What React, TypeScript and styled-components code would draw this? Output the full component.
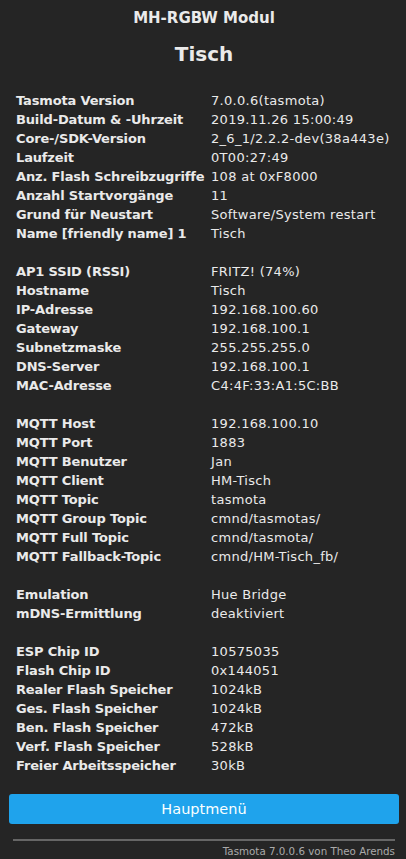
import React from "react";
import styled, { createGlobalStyle } from "styled-components";

const GlobalStyle = createGlobalStyle`
  html, body {
    margin: 0;
    padding: 0;
    background: #252525;
  }
  body {
    color: #eaeaea;
    font-family: "DejaVu Sans", Verdana, sans-serif;
  }
`;

const Page = styled.div`
  width: 406px;
  min-height: 859px;
  box-sizing: border-box;
  padding: 0 7px 0 9px;
  display: flex;
  flex-direction: column;
`;

const Module = styled.h3`
  margin: 0;
  padding-top: 9px;
  height: 18px;
  line-height: 18px;
  font-size: 15px;
  font-weight: bold;
  text-align: center;
`;

const DeviceName = styled.h2`
  margin: 0;
  padding-top: 15px;
  height: 24px;
  line-height: 24px;
  font-size: 20px;
  font-weight: bold;
  text-align: center;
`;

const InfoTable = styled.div`
  margin-top: 25px;
  padding-left: 7px;
  display: grid;
  grid-template-columns: 195px 1fr;
  grid-auto-rows: 19px;
  font-size: 13px;
  line-height: 19px;
`;

const Label = styled.div`
  font-weight: bold;
  color: #eaeaea;
  white-space: nowrap;
  letter-spacing: -0.15px;
`;

const Value = styled.div`
  color: #eaeaea;
  white-space: nowrap;
  letter-spacing: 0.3px;
`;

const Spacer = styled.div`
  grid-column: 1 / span 2;
`;

const MenuButton = styled.button`
  margin-top: 19px;
  width: 390px;
  height: 30px;
  border: 0;
  border-radius: 3px;
  background: #1fa3ec;
  color: #faffff;
  font-family: "DejaVu Sans", Verdana, sans-serif;
  font-size: 14.5px;
  line-height: 30px;
  padding: 0;
  cursor: pointer;
`;

const Rule = styled.hr`
  margin: 15px 4px 0 4px;
  border: 0;
  border-top: 2px solid #666;
  height: 0;
`;

const Footer = styled.div`
  margin: 3px 4px 0 0;
  text-align: right;
  font-size: 10.3px;
  line-height: 14px;
  color: #aaa;
`;

type Row = [string, string] | null;

const rows: Row[] = [
  ["Tasmota Version", "7.0.0.6(tasmota)"],
  ["Build-Datum & -Uhrzeit", "2019.11.26 15:00:49"],
  ["Core-/SDK-Version", "2_6_1/2.2.2-dev(38a443e)"],
  ["Laufzeit", "0T00:27:49"],
  ["Anz. Flash Schreibzugriffe", "108 at 0xF8000"],
  ["Anzahl Startvorgänge", "11"],
  ["Grund für Neustart", "Software/System restart"],
  ["Name [friendly name] 1", "Tisch"],
  null,
  ["AP1 SSID (RSSI)", "FRITZ! (74%)"],
  ["Hostname", "Tisch"],
  ["IP-Adresse", "192.168.100.60"],
  ["Gateway", "192.168.100.1"],
  ["Subnetzmaske", "255.255.255.0"],
  ["DNS-Server", "192.168.100.1"],
  ["MAC-Adresse", "C4:4F:33:A1:5C:BB"],
  null,
  ["MQTT Host", "192.168.100.10"],
  ["MQTT Port", "1883"],
  ["MQTT Benutzer", "Jan"],
  ["MQTT Client", "HM-Tisch"],
  ["MQTT Topic", "tasmota"],
  ["MQTT Group Topic", "cmnd/tasmotas/"],
  ["MQTT Full Topic", "cmnd/tasmota/"],
  ["MQTT Fallback-Topic", "cmnd/HM-Tisch_fb/"],
  null,
  ["Emulation", "Hue Bridge"],
  ["mDNS-Ermittlung", "deaktiviert"],
  null,
  ["ESP Chip ID", "10575035"],
  ["Flash Chip ID", "0x144051"],
  ["Realer Flash Speicher", "1024kB"],
  ["Ges. Flash Speicher", "1024kB"],
  ["Ben. Flash Speicher", "472kB"],
  ["Verf. Flash Speicher", "528kB"],
  ["Freier Arbeitsspeicher", "30kB"],
];

export default function App() {
  return (
    <>
      <GlobalStyle />
      <Page>
        <Module>MH-RGBW Modul</Module>
        <DeviceName>Tisch</DeviceName>
        <InfoTable>
          {rows.map((row, i) =>
            row ? (
              <React.Fragment key={i}>
                <Label>{row[0]}</Label>
                <Value>{row[1]}</Value>
              </React.Fragment>
            ) : (
              <Spacer key={i} />
            )
          )}
        </InfoTable>
        <MenuButton>Hauptmenü</MenuButton>
        <Rule />
        <Footer>Tasmota 7.0.0.6 von Theo Arends</Footer>
      </Page>
    </>
  );
}
